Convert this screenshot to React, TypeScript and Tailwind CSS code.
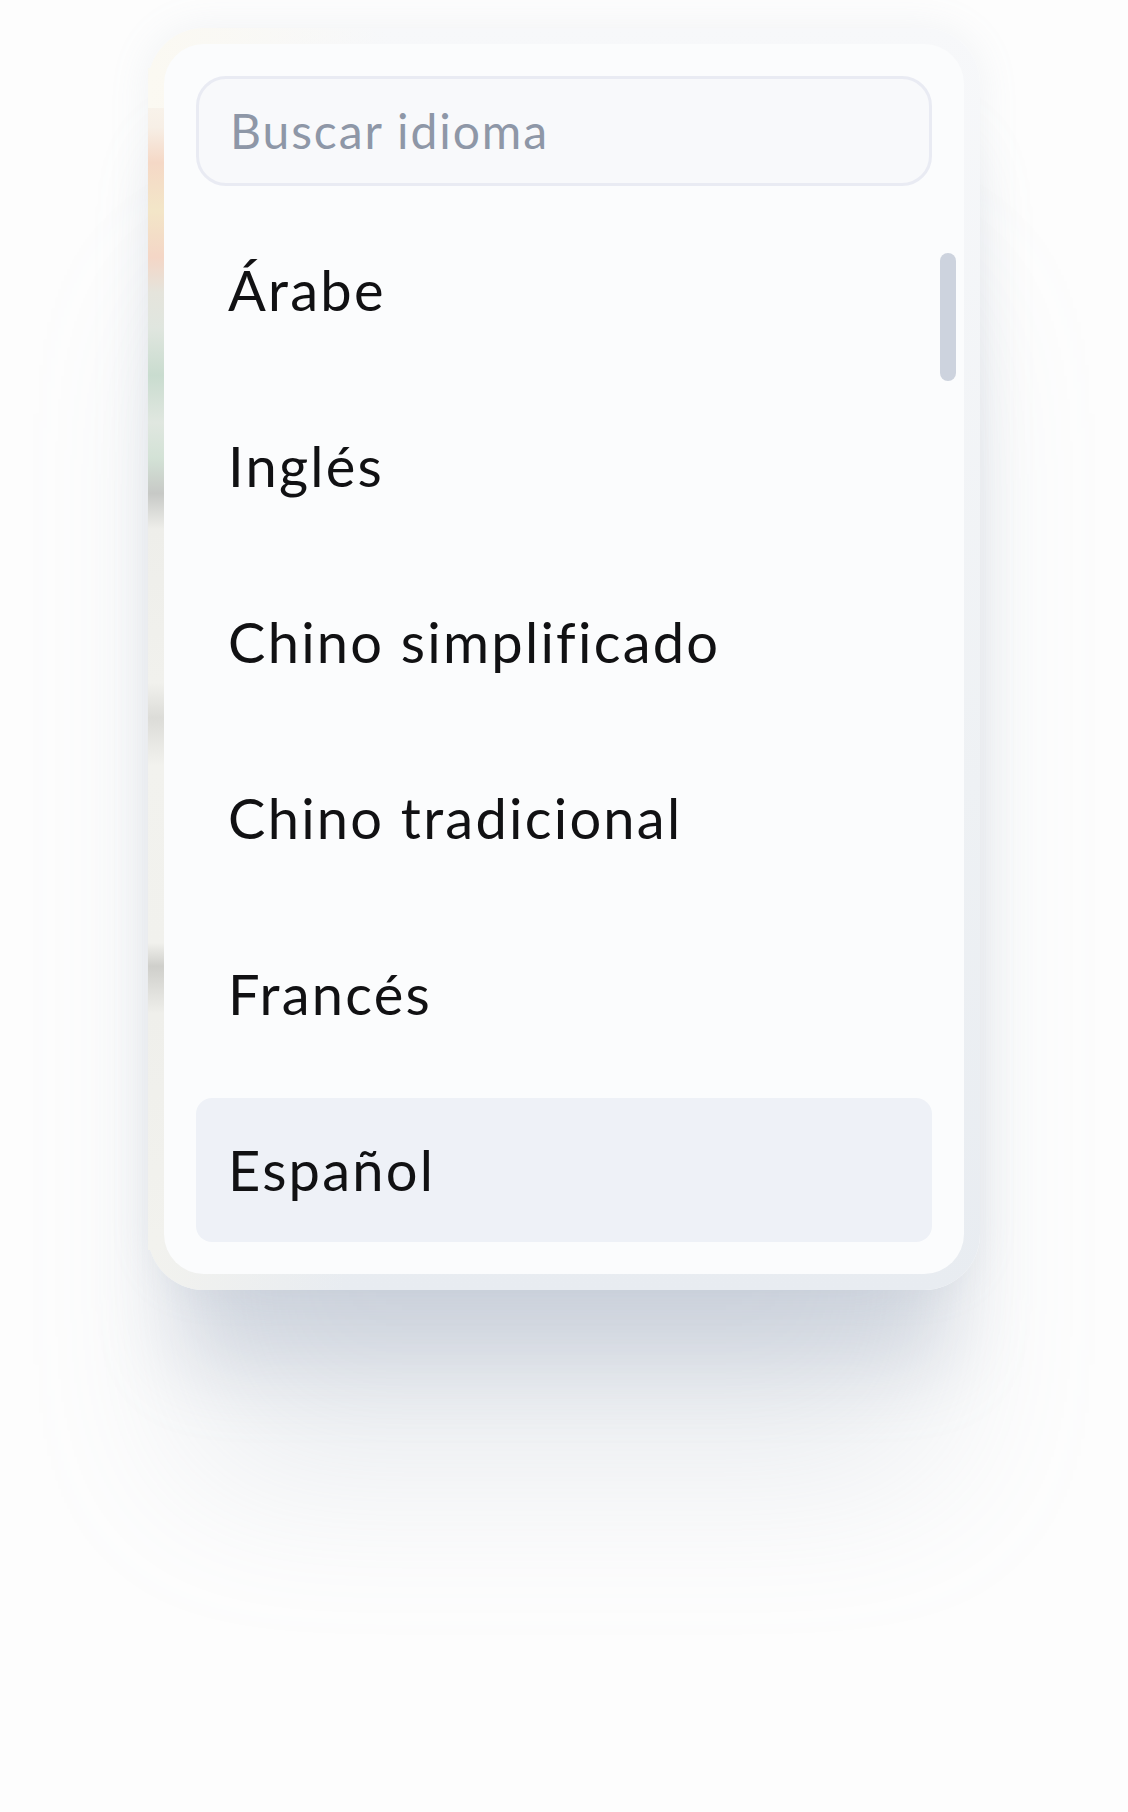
import React from 'react';

const languages = [
  'Árabe',
  'Inglés',
  'Chino simplificado',
  'Chino tradicional',
  'Francés',
  'Español',
];

const selected = 'Español';

export default function App() {
  return (
    <div className="min-h-[1812px] w-[1128px] bg-[#fdfdfd] pt-[28px] pl-[148px] font-['Lato','Noto_Sans',sans-serif] [font-variant-ligatures:none]">
      <div className="relative w-[832px] rounded-[56px] bg-[linear-gradient(to_bottom,#f7f8fa,#eef1f4_60%,#e8ecf1)] p-4 shadow-[0_100px_80px_-30px_rgba(148,163,184,0.32),0_230px_170px_-50px_rgba(148,163,184,0.2),0_0_40px_rgba(148,163,184,0.12)]">
        {/* frosted rim tint, left side */}
        <div className="absolute left-0 top-[40px] bottom-[40px] w-4 bg-[linear-gradient(to_bottom,#faf9f3_0%,#f7efe6_5%,#f5d8c6_8%,#f3e6c8_12%,#f4d6c6_16%,#e5e4dc_19%,#e0e6df_22%,#c9dccf_26%,#e0e7e0_30%,#d3e2d6_33%,#c7c9c6_36%,#eeeeea_39%,#f1f1ed_52%,#dcdcd8_55%,#f2f2ee_59%,#f1f1ed_74%,#cfcfcb_76%,#efefeb_80%,#f2f2ee_100%)]" />
        <div className="absolute left-0 top-0 h-[80px] w-[240px] rounded-tl-[56px] bg-[linear-gradient(to_right,#fbf9f2,rgba(251,249,242,0))]" />
        <div className="absolute left-0 bottom-0 h-[60px] w-[200px] rounded-bl-[56px] bg-[linear-gradient(to_right,#f2f2ee,rgba(242,242,238,0))]" />

        <div className="relative rounded-[40px] bg-[#fbfcfd] p-8">
          <div className="flex h-[110px] items-center rounded-[30px] border-[3px] border-[#e9ebf3] bg-[#f8f9fb] pl-[31px] pr-8">
            <span className="text-[48px] leading-none tracking-[0.04em] text-[#8e97a7]">Buscar idioma</span>
          </div>

          <div className="mt-8 flex flex-col gap-8">
            {languages.map((lang) => (
              <div
                key={lang}
                className={
                  lang === selected
                    ? 'flex h-[144px] items-center rounded-2xl bg-[#eef1f7] px-8'
                    : 'flex h-[144px] items-center rounded-2xl px-8'
                }
              >
                <span className="text-[56px] leading-none tracking-[0.04em] text-[#111113]">{lang}</span>
              </div>
            ))}
          </div>

          <div className="absolute left-[776px] top-[209px] h-[128px] w-4 rounded-full bg-[#cdd3de]" />
        </div>
      </div>
    </div>
  );
}
